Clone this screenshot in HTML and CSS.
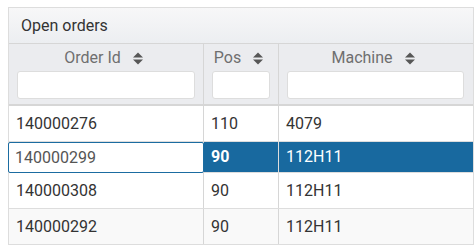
FILE: index.html
```html
<!DOCTYPE html>
<html>
<head>
<meta charset="utf-8">
<link rel="stylesheet" href="styles.css">
</head>
<body>
<div class="grid">
  <div class="title">Open orders</div>
  <div class="head">
    <div class="hcell c1">
      <div class="hlabel"><span>Order Id</span><svg class="sort" viewBox="0 0 10 13" width="10" height="13"><polygon points="0,5.5 5,0.5 10,5.5"/><polygon points="0,7.5 10,7.5 5,12.5"/></svg></div>
      <div class="filter"></div>
    </div>
    <div class="hcell c2">
      <div class="hlabel"><span>Pos</span><svg class="sort" viewBox="0 0 10 13" width="10" height="13"><polygon points="0,5.5 5,0.5 10,5.5"/><polygon points="0,7.5 10,7.5 5,12.5"/></svg></div>
      <div class="filter"></div>
    </div>
    <div class="hcell c3">
      <div class="hlabel"><span>Machine</span><svg class="sort" viewBox="0 0 10 13" width="10" height="13"><polygon points="0,5.5 5,0.5 10,5.5"/><polygon points="0,7.5 10,7.5 5,12.5"/></svg></div>
      <div class="filter"></div>
    </div>
  </div>
  <div class="row">
    <div class="cell c1">140000276</div>
    <div class="cell c2">110</div>
    <div class="cell c3">4079</div>
  </div>
  <div class="row sel">
    <div class="cell c1 editing"><div class="editor">140000299</div></div>
    <div class="cell c2 strong">90</div>
    <div class="cell c3">112H11</div>
  </div>
  <div class="row">
    <div class="cell c1">140000308</div>
    <div class="cell c2">90</div>
    <div class="cell c3">112H11</div>
  </div>
  <div class="row alt">
    <div class="cell c1">140000292</div>
    <div class="cell c2">90</div>
    <div class="cell c3">112H11</div>
  </div>
</div>
</body>
</html>
```
FILE: styles.css
```css
html, body {
  margin: 0;
  padding: 0;
  background: #ffffff;
  overflow: hidden;
}
body {
  padding: 7px 0 0 8px;
  font-family: Roboto, "Liberation Sans", sans-serif;
  font-size: 16px;
  color: #333333;
}
.grid {
  width: 464px;
  border: 1px solid #dddddd;
  border-bottom: none;
}
.title {
  height: 35px;
  line-height: 35px;
  padding-left: 12px;
  background: linear-gradient(#f7f7f8, #eceef1);
  border-bottom: 1px solid #d6d6d6;
  color: #333333;
}
.head {
  display: flex;
  background: #ebecef;
  border-bottom: 2px solid #d6d6d6;
}
.hcell {
  box-sizing: border-box;
  height: 60px;
  padding: 4px 8px 0 8px;
  display: flex;
  flex-direction: column;
}
.c1 { width: 195px; border-right: 1px solid #d6d6d6; box-sizing: border-box; }
.c2 { width: 75px; border-right: 1px solid #d6d6d6; box-sizing: border-box; }
.c3 { width: 194px; box-sizing: border-box; }
.hcell.c3 { padding-right: 9px; }
.hlabel {
  height: 20px;
  line-height: 20px;
  display: flex;
  justify-content: center;
  align-items: center;
  gap: 12px;
  padding-right: 5px;
  color: #6f6f6f;
}
.sort {
  fill: #575757;
  margin-top: 1px;
}
.filter {
  margin-top: 3px;
  height: 28px;
  box-sizing: border-box;
  background: #ffffff;
  border: 1px solid #dddddd;
  border-radius: 3px;
}
.row {
  display: flex;
  background: #ffffff;
  border-bottom: 1px solid #dddddd;
}
.row.alt { background: #f9f9f9; }
.cell {
  height: 35px;
  line-height: 35px;
  padding-left: 7px;
  white-space: nowrap;
}
.row.sel .cell {
  height: 30px;
  line-height: 30px;
  background: #18699f;
  color: #ffffff;
}
.row.sel .cell.strong { font-weight: bold; }
.row.sel .c1, .row.sel .c2 { border-right-color: #dddddd; }
.row.sel .cell.editing {
  position: relative;
  background: #ffffff;
}
.editor {
  position: absolute;
  left: -1px;
  top: 0;
  right: -1px;
  bottom: -1px;
  box-sizing: border-box;
  border: 1px solid #1b6ca1;
  border-radius: 2px;
  background: #ffffff;
  padding-left: 6px;
  line-height: 29px;
  color: #555555;
  font-weight: normal;
}
```
